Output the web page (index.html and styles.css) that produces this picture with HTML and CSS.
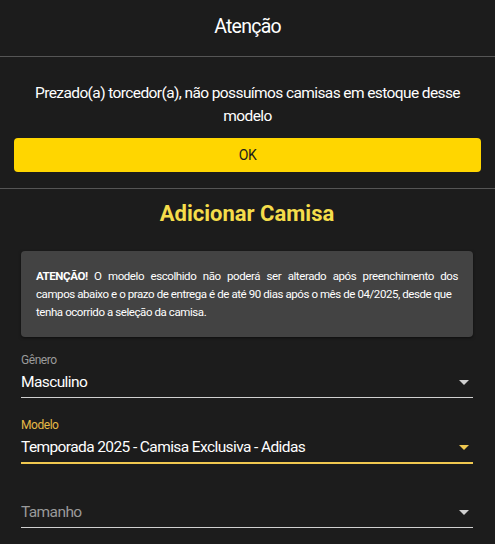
FILE: index.html
```html
<!DOCTYPE html>
<html lang="pt-BR">
<head>
<meta charset="utf-8">
<link rel="stylesheet" href="styles.css">
</head>
<body>
<div class="page">
  <header class="dialog-head"><h1 class="dialog-title">Atenção</h1></header>
  <section class="dialog-body">
    <p class="dialog-msg">Prezado(a) torcedor(a), não possuímos camisas em estoque desse modelo</p>
    <button class="ok-btn">OK</button>
  </section>
  <main class="form">
    <h2 class="form-title">Adicionar Camisa</h2>
    <div class="notice">
      <span class="line justify"><strong>ATENÇÃO!</strong> O modelo escolhido não poderá ser alterado após preenchimento dos</span>
      <span class="line">campos abaixo e o prazo de entrega é de até 90 dias após o mês de 04/2025, desde que</span>
      <span class="line">tenha ocorrido a seleção da camisa.</span>
    </div>
    <div class="field">
      <span class="label">Gênero</span>
      <div class="select"><span class="value">Masculino</span><span class="arrow"></span></div>
    </div>
    <div class="field focused">
      <span class="label">Modelo</span>
      <div class="select"><span class="value">Temporada 2025 - Camisa Exclusiva - Adidas</span><span class="arrow"></span></div>
    </div>
    <div class="field">
      <span class="label"></span>
      <div class="select"><span class="value placeholder">Tamanho</span><span class="arrow"></span></div>
    </div>
  </main>
</div>
</body>
</html>
```
FILE: styles.css
```css
* { box-sizing: border-box; }
html, body { margin: 0; padding: 0; background: #1c1c1c; }
body { font-family: Roboto, "Liberation Sans", sans-serif; color: #fff; }
.page { width: 495px; }
.dialog-head {
  height: 57px;
  display: flex;
  align-items: center;
  justify-content: center;
  border-bottom: 1px solid #555;
}
.dialog-title {
  margin: 0;
  font-size: 19.5px;
  font-weight: 400;
  letter-spacing: -0.75px;
  line-height: 24px;
  padding-bottom: 3px;
}
.dialog-body {
  padding: 25px 14px 16px;
  border-bottom: 1px solid #555;
}
.dialog-msg {
  margin: 0 0 10px;
  text-align: center;
  font-size: 15.5px;
  letter-spacing: -0.6px;
  line-height: 23px;
  padding: 0 10px;
}
.ok-btn {
  display: block;
  width: 100%;
  height: 34px;
  border: 0;
  border-radius: 4px;
  background: #ffd600;
  color: #1c1c1c;
  font-family: inherit;
  font-size: 14px;
  letter-spacing: -0.5px;
  padding: 0;
}
.form { padding: 0 22px 0 21px; }
.form-title {
  margin: 0;
  text-align: center;
  color: #f5dd4b;
  font-size: 22px;
  font-weight: 700;
  line-height: 26px;
  padding-top: 12px;
}
.notice {
  margin-top: 24px;
  background: #434343;
  border-radius: 4px;
  padding: 16px 15px 16px 15px;
  font-size: 11.5px;
  letter-spacing: -0.42px;
  line-height: 18px;
  box-shadow: 0 1px 3px rgba(0,0,0,0.5);
}
.line { display: block; white-space: nowrap; }
.line.justify { white-space: normal; text-align: justify; text-align-last: justify; }
.notice strong { font-weight: 700; }
.field { margin-top: 15px; height: 46px; display: flex; flex-direction: column; }
.field + .field { margin-top: 19px; }
.label { height: 16px; font-size: 12px; letter-spacing: -0.45px; line-height: 16px; color: #9a9a9a; }
.select {
  margin-top: 3px;
  display: flex;
  align-items: center;
  justify-content: space-between;
  height: 27px;
  padding-bottom: 4px;
  border-bottom: 1px solid #d0d0d0;
}
.value { font-size: 15.5px; letter-spacing: -0.6px; line-height: 22px; }
.placeholder { color: #9a9a9a; }
.arrow {
  width: 0; height: 0;
  margin-right: 4px;
  border-left: 5px solid transparent;
  border-right: 5px solid transparent;
  border-top: 5px solid #cfcfcf;
}
.focused .label { color: #e6b947; }
.focused .select { border-bottom: 2px solid #f0c850; height: 28px; }
.focused .arrow { border-top-color: #f0c850; }
```
